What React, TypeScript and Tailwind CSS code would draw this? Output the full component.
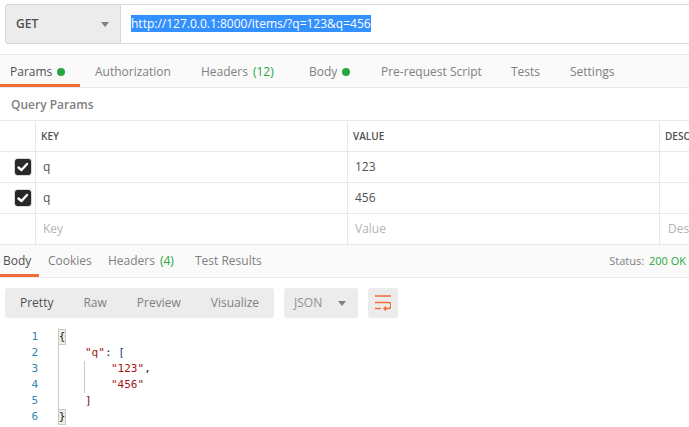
import React from "react";

const Dot = () => <span className="ml-[5px] inline-block size-2 rounded-full bg-[#26a541]" />;

function Tab({ label, active, children, cls }: { label: string; active?: boolean; children?: React.ReactNode; cls: string }) {
  return (
    <div className={`flex h-full items-center ${cls} ${active ? "border-b-[3px] border-[#f26b3a] pt-[3px] text-[#505050]" : "text-[#808080]"}`}>
      <span>{label}</span>
      {children}
    </div>
  );
}

function Row({ k, v, d, checked }: { k: string; v: string; d?: string; checked?: boolean }) {
  const text = checked ? "text-[#505050]" : "text-[#b3b3b3]";
  return (
    <div className={`flex h-[31px] border-b border-[#e8e8e8] text-xs ${text}`}>
      <div className="flex w-[36px] shrink-0 items-center justify-end border-r border-[#e8e8e8] pr-[4px]">
        {checked && (
          <div className="flex size-4 items-center justify-center rounded-[2px] bg-[#282828] outline outline-1 outline-[#d8d8d8]">
            <svg viewBox="0 0 16 16" className="size-4" fill="none" stroke="#fff" strokeWidth="2.4" strokeLinecap="round" strokeLinejoin="round">
              <path d="M3.5 8.5 6.5 11 12 5" />
            </svg>
          </div>
        )}
      </div>
      <div className="flex w-[312px] shrink-0 items-center border-r border-[#e8e8e8] pl-[7px]">{k}</div>
      <div className="flex w-[312px] shrink-0 items-center border-r border-[#e8e8e8] pl-[7px]">{v}</div>
      <div className="flex flex-1 items-center overflow-hidden whitespace-nowrap pl-[8px]">{d}</div>
    </div>
  );
}

const Head = ({ w, children }: { w: string; children?: React.ReactNode }) => (
  <div className={`flex items-center ${w} border-r border-[#e8e8e8] pl-[5px]`}>{children}</div>
);

const Brace = ({ c }: { c: string }) => (
  <div className="-ml-px flex h-4 w-[8px] items-center justify-center border border-[#c8c8c8] bg-[#eef0e6]">{c}</div>
);

export default function App() {
  return (
    <div className="h-[427px] w-[689px] overflow-hidden bg-white font-['Open_Sans',sans-serif] text-xs">
      <div className="flex h-[54px] pl-[5px] pt-[4px]">
        <div className="flex h-[40px] w-[116px] items-center justify-between rounded-l-[3px] border border-[#d8d8d8] bg-[#ececec] pl-[10px] pr-[10px] text-xs font-semibold text-[#505050]">
          <span>GET</span>
          <span className="mr-[1px] border-x-[4px] border-t-[5px] border-x-transparent border-t-[#808080]" />
        </div>
        <div className="flex h-[40px] flex-1 items-center border-y border-[#d8d8d8] pb-[1px] pl-[10px]">
          <span className="bg-[#3390ff] text-xs leading-[17px] text-white">http://127.0.0.1:8000/items/?q=123&amp;q=456</span>
        </div>
      </div>

      <div className="flex h-[34px] border-y border-[#e8e8e8] bg-[#fafafa] pt-[1px]">
        <Tab label="Params" active cls="w-[80px] pl-[10px]"><Dot /></Tab>
        <Tab label="Authorization" cls="w-[121px] pl-[15px]" />
        <Tab label="Headers" cls="w-[108px]"><span className="ml-[5px] text-[#26a541]">(12)</span></Tab>
        <Tab label="Body" cls="w-[72px]"><Dot /></Tab>
        <Tab label="Pre-request Script" cls="w-[130px]" />
        <Tab label="Tests" cls="w-[59px]" />
        <Tab label="Settings" cls="w-[60px]" />
      </div>

      <div className="flex h-[33px] items-center border-b border-[#e8e8e8] pl-[11px] pt-[1px] font-semibold text-[#808080]">Query Params</div>

      <div className="flex h-[31px] border-b border-[#e8e8e8] pt-[1px] text-[10px] font-semibold text-[#505050]">
        <Head w="w-[36px] shrink-0" />
        <Head w="w-[312px] shrink-0">KEY</Head>
        <Head w="w-[312px] shrink-0">VALUE</Head>
        <div className="flex flex-1 items-center overflow-hidden whitespace-nowrap pl-[5px]">DESCRIPTION</div>
      </div>
      <Row k="q" v="123" checked />
      <Row k="q" v="456" checked />
      <Row k="Key" v="Value" d="Description" />

      <div className="flex h-[33px] items-center border-b border-[#e8e8e8] bg-[#fafafa]">
        <Tab label="Body" active cls="w-[48px] pl-[3px] !border-0 !pt-0" />
        <Tab label="Cookies" cls="w-[60px]" />
        <Tab label="Headers" cls="w-[87px]"><span className="ml-[5px] text-[#26a541]">(4)</span></Tab>
        <Tab label="Test Results" cls="w-[80px]" />
        <div className="ml-auto pr-[3px] text-[11px] text-[#808080]">Status: <span className="ml-[2px] text-[#26a541]">200 OK</span></div>
      </div>
      <div className="-mt-[4px] h-[3px] w-[39px] bg-[#f26b3a]" />

      <div className="ml-[5px] mt-[11px] flex h-[30px] gap-[10px]">
        <div className="flex w-[269px] items-center rounded-[3px] bg-[#ececec] text-[#808080]">
          <span className="ml-[15px] text-[#505050]">Pretty</span>
          <span className="ml-[30px]">Raw</span>
          <span className="ml-[30px]">Preview</span>
          <span className="ml-[30px]">Visualize</span>
        </div>
        <div className="flex w-[74px] items-center justify-between rounded-[3px] bg-[#ececec] pl-[10px] pr-[12px] text-[#909090]">
          <span>JSON</span>
          <span className="border-x-[4px] border-t-[5px] border-x-transparent border-t-[#808080]" />
        </div>
        <div className="flex w-[30px] items-center justify-center rounded-[3px] bg-[#ececec]">
          <svg viewBox="0 0 16 16" className="size-4" fill="none" stroke="#f26b3a" strokeWidth="1.5">
            <path d="M0 1H16M0 7.500H14c2.500 0 2.500 6 0 6H9M11 11.500 9 13.500 11 15.500M0 13.500H6" />
          </svg>
        </div>
      </div>

      <div className="mt-[10px] flex font-['DejaVu_Sans_Mono',monospace] text-[11px] leading-4">
        <div className="w-[38px] pt-[1px] text-right text-[#2f86b3]">
          {[1, 2, 3, 4, 5, 6].map((n) => <div key={n}>{n}</div>)}
        </div>
        <div className="ml-[20px] border-l border-[#c8c8c8] pt-[1px] text-[#222]">
          <Brace c="{" />
          <div className="pl-[26px]"><span className="text-[#a31515]">"q"</span>: <span className="text-[#0b3d91]">[</span></div>
          <div className="ml-[25px] border-l border-[#c8c8c8] pl-[26px] text-[#a31515]">
            <div>"123"<span className="text-[#222]">,</span></div>
            <div>"456"</div>
          </div>
          <div className="pl-[26px] text-[#7a1010]">]</div>
          <Brace c="}" />
        </div>
      </div>
    </div>
  );
}
